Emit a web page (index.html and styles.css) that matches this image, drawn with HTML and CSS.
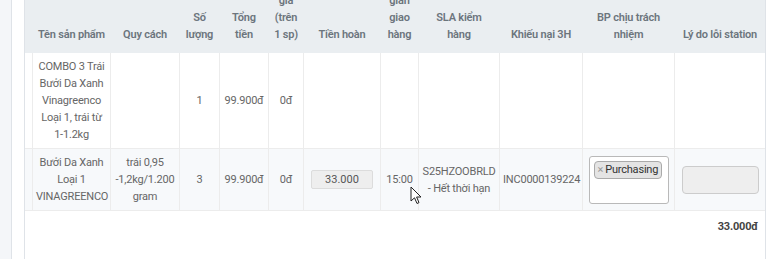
FILE: index.html
```html
<!DOCTYPE html>
<html lang="vi">
<head>
<meta charset="utf-8">
<link rel="stylesheet" href="styles.css">
</head>
<body>
<div class="page">
  <div class="sidebar"></div>
  <div class="gutter"></div>
  <div class="card">
    <table class="grid">
      <thead>
        <tr>
          <th class="c0"></th>
          <th class="c-name">Tên sản phẩm</th>
          <th class="c-spec">Quy cách</th>
          <th class="c-qty">Số<br>lượng</th>
          <th class="c-total">Tổng<br>tiền</th>
          <th class="c-price">Đơn<br>giá<br>(trên<br>1 sp)</th>
          <th class="c-refund">Tiền hoàn</th>
          <th class="c-time">Thời<br>gian<br>giao<br>hàng</th>
          <th class="c-sla">SLA kiểm<br>hàng</th>
          <th class="c-inc">Khiếu nại 3H</th>
          <th class="c-bp">BP chịu trách<br>nhiệm</th>
          <th class="c-reason">Lý do lỗi station</th>
        </tr>
      </thead>
      <tbody>
        <tr>
          <td></td>
          <td>COMBO 3 Trái Bưởi Da Xanh Vinagreenco Loại 1, trái từ 1-1.2kg</td>
          <td></td>
          <td>1</td>
          <td>99.900đ</td>
          <td>0đ</td>
          <td></td>
          <td></td>
          <td></td>
          <td></td>
          <td></td>
          <td></td>
        </tr>
        <tr class="alt">
          <td></td>
          <td>Bưởi Da Xanh Loại 1 VINAGREENCO</td>
          <td>trái 0,95 -1,2kg/1.200 gram</td>
          <td>3</td>
          <td>99.900đ</td>
          <td>0đ</td>
          <td><input class="money" type="text" value="33.000" readonly></td>
          <td>15:00</td>
          <td>S25HZOOBRLD - Hết thời hạn</td>
          <td>INC0000139224</td>
          <td><div class="tagbox"><span class="tag"><span class="x">×</span>Purchasing</span></div></td>
          <td><input class="reason" type="text" readonly></td>
        </tr>
      </tbody>
    </table>
    <div class="total">33.000đ</div>
  </div>
</div>
<svg class="cursor" width="12" height="19" viewBox="0 0 12 19"><path d="M1 1 L1 15 L4.5 11.8 L7 17.5 L9 16.6 L6.6 11 L11 11 Z" fill="#fff" stroke="#222" stroke-width="1" stroke-linejoin="round"/></svg>
</body>
</html>
```

FILE: styles.css
```css
html, body {
  margin: 0;
  padding: 0;
  height: 259px;
  overflow: hidden;
  background: #fff;
}
body {
  font-family: "Roboto", "Noto Sans", sans-serif;
  font-size: 11px;
  letter-spacing: -0.2px;
  line-height: 17px;
  color: #666;
  position: relative;
}
.page {
  display: flex;
  align-items: flex-start;
  height: 259px;
}
.sidebar {
  width: 11px;
  height: 100%;
  background: #f4f6f9;
  border-right: 1px solid #dfe3e8;
  flex: none;
}
.gutter {
  width: 12px;
  flex: none;
}
.card {
  width: 742px;
  box-sizing: border-box;
  flex: none;
  margin-top: -35px;
  min-height: 300px;
  border-left: 1px solid #dfe3e8;
  border-right: 1px solid #dfe3e8;
  background: #fff;
}
.grid {
  width: 740px;
  table-layout: fixed;
  border-collapse: separate;
  border-spacing: 0;
}
.grid th {
  box-sizing: border-box;
  background: #eaeef1;
  color: #6c757d;
  font-weight: 600;
  text-align: center;
  vertical-align: bottom;
  white-space: nowrap;
  padding: 10px 2px;
  border-right: 1px solid #eaeef1;
}
.grid td {
  box-sizing: border-box;
  text-align: center;
  vertical-align: middle;
  padding: 5px 3px;
  border-right: 1px solid #ececec;
  border-bottom: 1px solid #ececec;
}
.grid th:last-child, .grid td:last-child { border-right: none; }
.grid tr.alt td { background: #f7f9fb; }
.c0 { width: 8px; }
.c-name { width: 78px; }
.c-spec { width: 69px; }
.c-qty { width: 40px; }
.c-total { width: 49px; }
.c-price { width: 35px; }
.c-refund { width: 77px; }
.c-time { width: 38px; }
.c-sla { width: 81px; }
.c-inc { width: 83px; }
.c-bp { width: 92px; }
.c-reason { width: 90px; }
.money {
  display: block;
  margin: 0 auto;
  box-sizing: border-box;
  width: 62px;
  height: 19px;
  padding: 0;
  border: 1px solid #dcdcdc;
  border-radius: 2px;
  background: #eeeeee;
  font: inherit;
  color: #555;
  text-align: center;
}
.reason {
  display: block;
  margin: 0 auto;
  box-sizing: border-box;
  width: 77px;
  height: 28px;
  padding: 0;
  border: 1px solid #cccccc;
  border-radius: 4px;
  background: #eeeeee;
}
.tagbox {
  box-sizing: border-box;
  width: 80px;
  height: 48px;
  margin: 0 auto;
  border: 1px solid #b9b9b9;
  border-radius: 3px;
  background: #fff;
  padding: 4px;
  display: flex;
  align-items: flex-start;
}
.tag {
  display: inline-flex;
  align-items: center;
  height: 18px;
  box-sizing: border-box;
  padding: 0 3px;
  border: 1px solid #aaa;
  border-radius: 4px;
  background: #e4e4e4;
  color: #333;
  font-size: 11px;
  line-height: 16px;
  white-space: nowrap;
}
.tag .x {
  color: #999;
  margin-right: 2px;
}
.total {
  text-align: right;
  padding: 7px 7px;
  font-weight: 700;
  color: #444;
}
.cursor {
  position: absolute;
  left: 410px;
  top: 186px;
}
```
